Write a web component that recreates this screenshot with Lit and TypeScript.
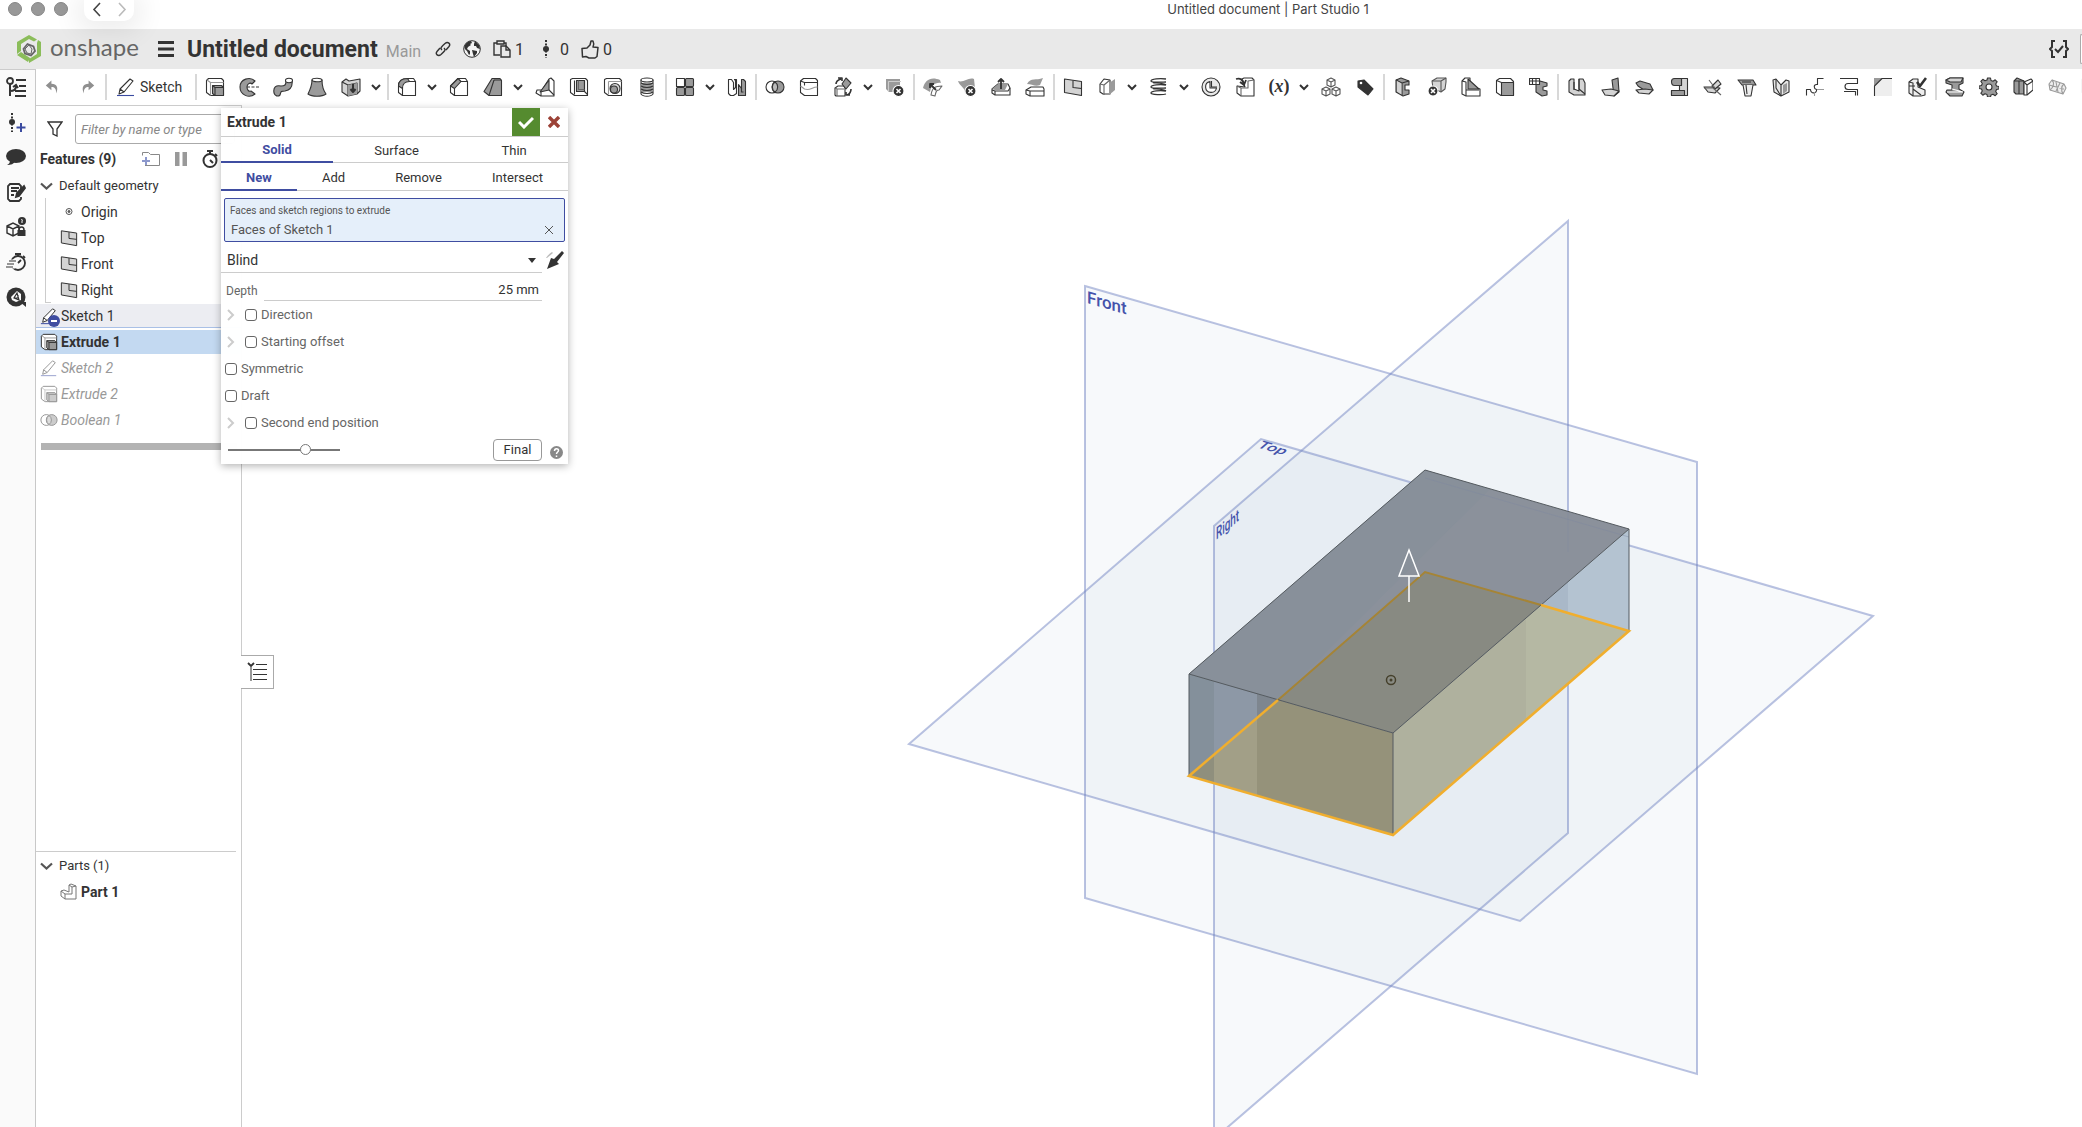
import { LitElement, html, svg, css, nothing } from "lit";
import { customElement, property, state } from "lit/decorators.js";
import { classMap } from "lit/directives/class-map.js";

/* Line icons on a 20 x 20 grid. Groups share the stroke and fill set on the svg. */
const D = "#333";
const G = "#9a9a9a";
const L = "#d4d4d4";
const W = "#fff";

const glyphs: Record<string, unknown> = {
  undo: svg`<path d="M8 2L1 8l7 6v-4c4 0 6 2 6 8 3-7 1-12-6-12z" fill="#8f8f8f" stroke="none"/>`,
  redo: svg`<path d="M12 2l7 6-7 6v-4c-4 0-6 2-6 8-3-7-1-12 6-12z" fill="#8f8f8f" stroke="none"/>`,
  pencil: svg`<path d="M4 12L14 2l3 2-9 11-5 2zM4 12l4 3" fill="#fff"/><path d="M1 18.5h17" stroke="#3b4ba0"/>`,
  extrude: svg`<path d="M1.5 3.5l2-2h13l2 2v15H5.500l-4-3z" fill="${W}"/><path d="M5.500 5.500h13M5.500 5.500v13M2 3l3.500 2.500" stroke="${G}"/><path d="M7.500 8.500h9l2 2v8h-8.500l-2.500-2z" fill="${G}"/><path d="M7.500 8.500l2.500 2v8M10 10.500h8.500"/>`,
  revolve: svg`<path d="M16 4C11-1 1 2 1 10s9 12 15 7l-4-3c-2 1-4-1-4-4s3-5 5-3z" fill="${G}"/><path d="M8 10h12" stroke-dasharray="3 1.500"/>`,
  sweep: svg`<path d="M1 16c-1-6 2-8 7-7 4 0 5-1 5-5l6-1c1 7-2 10-7 11-4 0-4 0-5 4-2 2-5 1-6-2z" fill="${G}"/><ellipse cx="16" cy="3.500" rx="3.500" ry="2.200" fill="${W}"/>`,
  loft: svg`<path d="M5 3c0 6-2 10-4 14 4 3 14 3 18 0-3-4-4-8-4-14z" fill="${G}"/><ellipse cx="10" cy="3" rx="5" ry="1.800" fill="${W}"/>`,
  thicken: svg`<path d="M1 5l4-3 3 2 11-2v12l-3 3-9 2-6-4z" fill="${L}"/><path d="M7 8v11M1 5l6 3 9-2v11" fill="none"/><path d="M7 8l9-2v11l-9 2z" fill="${G}" stroke="none"/><path d="M12 7v8M9.500 12l2.500 3 2.500-3" stroke-width="2"/>`,
  fillet: svg`<path d="M1.500 9c0-5 3-7.500 9-7.500h6l2 3v14H5.500l-4-3z" fill="${W}"/><path d="M1.500 9c0-5 3-7.500 9-7.500l2 3c-5 0-7 2-7 7z" fill="${G}"/><path d="M5.500 11v7.500M12 4.500h6.500"/>`,
  chamfer: svg`<path d="M1.500 9L9 1.500h7.500l2 3v14H5.500l-4-3z" fill="${W}"/><path d="M1.500 9L9 1.500l3 3-6.500 7z" fill="${G}"/><path d="M5.500 11v7.500M12 4.500h6.500"/>`,
  draft: svg`<path d="M9 1.500h8l1.500 2v15H6l-5-4z" fill="${G}"/><path d="M11 3h7.500M11 3L6 18.500"/>`,
  rib: svg`<path d="M14 2l2-1 3 3v15H6l-5-3 1-3h5z" fill="${W}"/><path d="M14 3v10L5 15z" fill="${G}"/><path d="M14 13l5 5M6 19v-4"/>`,
  shell: svg`<path d="M1.500 2.500l2-1h13l2 2v15H5.500l-4-3z" fill="${W}"/><path d="M7.500 3.500h8v11h-8z" fill="${G}"/><path d="M5.500 3.500v14M15.500 3.500v11M7.500 14.500h8l3 3"/><path d="M9.500 3.500v9h6" stroke="#666"/>`,
  hole: svg`<path d="M1.500 2.500l2-1h13l2 2v15H5.500l-4-3z" fill="${W}"/><path d="M5.500 4.500h13M5.500 4.500v13" stroke="${G}"/><circle cx="12" cy="11.500" r="5" fill="${L}"/><circle cx="11" cy="12.500" r="3.500" fill="${G}"/>`,
  thread: svg`<path d="M4 3v14c2 3 10 3 12 0V3z" fill="${W}"/><ellipse cx="10" cy="3" rx="6" ry="2" fill="${W}"/><path d="M4 6h12v9H4z" fill="${G}" stroke="none"/><path d="M4 6c3 2 9 2 12 0M4 9c3 2 9 2 12 0M4 12c3 2 9 2 12 0M4 15c3 2 9 2 12 0"/>`,
  pattern: svg`<rect x="1.500" y="1.500" width="8" height="8" fill="${W}"/><rect x="10.500" y="1.500" width="8" height="8" rx="1" fill="${G}"/><rect x="1.500" y="10.500" width="8" height="8" rx="1" fill="${G}"/><rect x="10.500" y="10.500" width="8" height="8" rx="1" fill="${G}"/>`,
  mirror: svg`<path d="M1.500 2.500h3l2 3v7l2-2v-7l-1-1h2v14l-3 2h-3l-2-2z" fill="${W}"/><path d="M11.500 18.500v-11l3 4v-9h2l2 2v14z" fill="${G}"/><path d="M14.500 11v4h2"/>`,
  boolean: svg`<circle cx="7" cy="10" r="6" fill="${W}"/><circle cx="13" cy="10" r="6" fill="${G}"/><path d="M10 5a6 6 0 0 1 0 10 6 6 0 0 1 0-10z" fill="#bbb"/>`,
  split: svg`<path d="M1.500 4l3-2.500h12l2 2v15H5.500l-4-3z" fill="${W}"/><path d="M1.500 4l4 1.500h13M5.500 5.500v3"/><path d="M1.500 9l4 3c6 2 7-2 13-2" stroke="${G}"/>`,
  transform: svg`<path d="M2 11l3-2h6l1 2v8H3l-1-1z" fill="${W}"/><path d="M2 11l2 1h7M4 12v7" stroke="#666"/><path d="M13 1l5 5-5 6-4-5z" fill="${G}"/><path d="M3 7c0-3 2-4 5-5M5 1h4v3M18 12c0 3-1 5-4 6M13 15v3h4" stroke-width="1.600"/>`,
  delpart: svg`<path d="M1 2h14v13H4l-3-3z" fill="${G}" stroke="none"/><path d="M3.500 15V4.500H16" stroke="#ccc"/><circle cx="13.500" cy="14" r="5.500" fill="${D}" stroke="${W}"/><path d="M11.500 12l4 4m0-4l-4 4" stroke="${W}" stroke-width="1.600"/>`,
  modfillet: svg`<path d="M0 11C2 3 8-1 17 3l1 3c-6-1-10 3-11 9z" fill="${G}" stroke="none"/><path d="M8 18c1-7 4-9 11-9l-3 4c-3 0-3 2-4 6z" fill="${W}" stroke="#666"/><path d="M13 13L7 7M7 11V7h4" stroke-width="1.800"/>`,
  delface: svg`<path d="M1 4c6 2 10-4 16-2l1 9-7 6-3-1c0-6-5-6-7-12z" fill="${G}" stroke="none"/><circle cx="13.500" cy="14" r="5.500" fill="${D}" stroke="${W}"/><path d="M11.500 12l4 4m0-4l-4 4" stroke="${W}" stroke-width="1.600"/>`,
  moveface: svg`<path d="M1 12l6-5h10l2 4v7H4l-3-2z" fill="${W}"/><path d="M1 12l6-5h10l-3 6H4z" fill="${G}" stroke="none"/><path d="M1 13l3 1h13l2-3M4 14v4"/><path d="M10 12V3M7 5l3-3 3 3" stroke-width="1.800"/>`,
  replace: svg`<path d="M1 13l5-3h12l1 2v7H5l-4-2z" fill="${W}"/><path d="M1 13l4 1h14M5 14v5"/><path d="M2 7c4-7 9-3 16-6l-3 7c-5 2-8-1-13-1z" fill="${G}" stroke="none"/>`,
  plane: svg`<path d="M1.500 2L18.500 4.500v14L1.500 15.500z" fill="${L}"/><path d="M10 3.500v7l8.500 1" fill="none"/>`,
  section: svg`<path d="M3 7l4-5 6 1v14H6l-3-2z" fill="${W}"/><path d="M3 7l4 1v10M7 8l6-5" stroke="#666"/><path d="M12 6l6-4v11l-6 5z" fill="${G}" stroke="none"/>`,
  helix: svg`<path d="M17 2C11 1 2 2 2 4s12 1 15 1M17 8c-6-1-15 0-15 2s12 1 15 1M17 14c-6-1-15 0-15 2s12 2 15 1M4 5.500C8 6 15 6 17 8M4 11.500c4 .5 11 .5 13 2.500" stroke-width="1.300" fill="none"/>`,
  pie: svg`<circle cx="10" cy="10" r="9" fill="#e9e9e9"/><path d="M9 4.500a5.500 5.500 0 1 0 6.500 6.500H9z" fill="${W}"/><path d="M10.500 4v6H16" fill="none"/>`,
  derive: svg`<path d="M7 2l2-1h8l2 2v16H6l-4-3V9l8 1z" fill="${W}"/><path d="M2 9l4 2h7V4l6-1M6 11v8" stroke="#666"/><path d="M1 2c4-1 7 0 8 6M5 5l4 3 2-5" stroke-width="1.800" fill="none"/>`,
  variable: svg`<text x="10" y="15" text-anchor="middle" font-family="Liberation Serif, serif" font-weight="700" font-size="18" fill="${D}" stroke="none">(<tspan font-style="italic">x</tspan>)</text>`,
  cubes: svg`<g fill="${W}" stroke="#555"><path d="M6 3l4-2 4 2v5l-4 2-4-2zM6 3l4 2 4-2M10 5v5"/><path d="M1 12l4-2 4 2v5l-4 2-4-2zM1 12l4 2 4-2M5 14v5"/><path d="M11 12l4-2 4 2v5l-4 2-4-2zM11 12l4 2 4-2M15 14v5"/></g>`,
  tag: svg`<path d="M3 4l6-1 9 9-5 6-10-8z" fill="${D}"/><circle cx="6" cy="6" r="1.300" fill="${W}" stroke="none"/>`,
  frame: svg`<path d="M3 3l5-2 8 3v4h-4v5h4v4l-6 2-7-4z" fill="${G}"/><path d="M3 3l6 3 7-2M9 6v12" fill="none"/><path d="M4 4l4.500 2.500v11L4 14.500z" fill="${L}" stroke="none"/>`,
  delframe: svg`<path d="M5 4l5-3h9v4l-1 7-4 3-8-4z" fill="${L}" stroke="#555"/><path d="M5 4h9v10M14 4l5-3" stroke="#555"/><circle cx="6" cy="14" r="5" fill="${D}" stroke="${W}"/><path d="M4 12l4 4m0-4l-4 4" stroke="${W}" stroke-width="1.600"/>`,
  gusset: svg`<path d="M1 4l3-3h5v8l10 3v7H5l-4-2z" fill="${W}"/><path d="M7 2l11 10H7z" fill="${G}"/><path d="M1 4l4 1v14M5 13h13"/>`,
  cube: svg`<path d="M1.500 3.500l3-2h11l3 3v14H6l-4.500-3z" fill="${W}"/><path d="M6.500 5.500h12v13h-12z" fill="${G}"/><path d="M1.500 3.500l5 2"/>`,
  cutlist: svg`<path d="M7 7l4-3 7 2v3l-4 1v3l4 1v4l-5 1-6-4z" fill="${G}"/><path d="M.5 1.500h10v6H.5zM.5 4h10M3.500 1.500v6M7 1.500v6" fill="${W}"/>`,
  sheet: svg`<path d="M2 4l2-2h3v10l5 2V2h4l2 4v12H7l-5-3z" fill="${L}"/><path d="M7 5v8M12 2v10l6 5"/>`,
  flange: svg`<path d="M11 3l6-2 1 14-5 4z" fill="${G}"/><path d="M1 13l9-1 8 2-5 5-9-1z" fill="${L}"/>`,
  hem: svg`<path d="M1 6l4-2 10 3 3 6-6 2-9-6z" fill="${G}"/><path d="M1 13l9-1 8 1-4 4-10-1z" fill="${L}"/>`,
  jog: svg`<path d="M12.500 1.500h6v17h-16v-5h8v-5h2z" fill="${L}"/><path d="M2.500 4.500c0-2 1-3 3-3h7v7h-7c-2 0-3-2-3-4zM2.500 13.500h13v5h-13z" fill="${G}"/>`,
  bend: svg`<path d="M1 10h7l9 1-5 5-7-1z" fill="${L}"/><path d="M9 9l6-6 3 4-6 5z" fill="${L}"/><path d="M1 11h9l8 7M6 3l6 8" stroke="#666"/>`,
  form: svg`<path d="M1 3h15l3 5H5z" fill="${G}"/><path d="M6 8l2 11h6l2-11" fill="#eee"/><path d="M5 5h9M9 8l1 9"/>`,
  corner: svg`<path d="M2 3l3-1 5 6v11l-7-4zM10 8l5-5 3 1v11l-8 4z" fill="#e8e8e8"/><path d="M12 8v9l4-3V6z" fill="${G}" stroke="none"/><path d="M5 2v9l5 8"/>`,
  tab: svg`<path d="M1.500 18.500v-6h4c0 5 7 4 6 0-3-1-3-5 0-5h1v-6h6" fill="none"/><path d="M12 12.500h7M9.500 15v4" stroke="${G}"/>`,
  relief: svg`<path d="M1 1.500h17.500v5H9c-4 0-4 6 0 6h9.500v6" fill="none"/><path d="M5 14.500h11.500v4" fill="none"/>`,
  cornerbreak: svg`<path d="M9 1h10v18H1V9z" fill="#eee" stroke="none"/><path d="M1 1h8L1 9z" fill="${G}" stroke="none"/><path d="M19 1.500H9L1.500 9v10"/>`,
  finish: svg`<path d="M2 5l4-3h5v8l7 3v5l-4 1H6l-4-3z" fill="#eee"/><path d="M2 5l4 1v13M6 12l8 6M2 9h6"/><path d="M10 5l3 4 6-8" stroke-width="2.600" fill="none"/>`,
  beam: svg`<path d="M1 3l4-2h13v5l-4 2v4l5 3-2 4H5l-4-4 1-2h5V8L1 6z" fill="${G}"/><path d="M7 12l11 3M2 15h15" stroke="${W}"/><path d="M1 3l4-2h13l-2 4H5z" fill="${L}"/>`,
  gear: svg`<path d="M8.500 1h3l.5 2.500 2 .8 2.200-1.500 2 2L16.700 7l.8 2 2.500.5v2.500l-2.500.5-.8 2 1.500 2.200-2 2-2.200-1.500-2 .8-.5 2h-3L8 17.500l-2-.8-2.200 1.500-2-2L3.300 14l-.8-2L0 11.500V9l2.500-.5.8-2-1.500-2.200 2-2L6 3.800l2-.8z" fill="${G}"/><circle cx="10" cy="10" r="3" fill="${W}"/>`,
  bookcube: svg`<path d="M1 4l3-3 7 3v13H3l-2-2z" fill="${G}"/><path d="M11 5l7-3 2 2v9l-6 5h-3z" fill="${W}"/><path d="M1 4h10M11 5l3 3v10M14 8l6-4M6 4v13"/>`,
  mesh: svg`<path d="M2 7l3-4 12 4 2 4-3 6-13-4z" fill="#eee" stroke="${G}"/><path d="M5 3c3 3 1 8-2 10M9 5l2 10M2 8l15 4M13 6l-4 8M17 7c-3 2-3 7-1 10" stroke="${G}" fill="none"/>`,
};

const icon = (name: string, size = 20) =>
  svg`<svg class="ic" width="${size}" height="${size}" viewBox="0 0 20 20" fill="none" stroke="#333" stroke-width="1.100" stroke-linejoin="round" aria-hidden="true">${glyphs[name]}</svg>`;

/* "|" is a divider, "v" the drop-down arrow of the tool before it. */
const TOOLS =
  "extrude revolve sweep loft thicken v | fillet v chamfer draft v rib shell hole thread | pattern v mirror | boolean split transform v delpart | modfillet delface moveface replace | plane section v helix v pie derive variable v cubes tag | frame delframe gusset cube cutlist | sheet flange hem jog bend form corner tab relief cornerbreak finish | beam gear bookcube mesh plane".split(" ");

const base = css`
  * { box-sizing: border-box; }
  button { font: inherit; color: inherit; background: none; border: 0; padding: 0; margin: 0; cursor: pointer; }
  svg { display: block; flex: none; }
`;

@customElement("top-bar")
export class TopBar extends LitElement {
  static styles = [base, css`
    :host { display: block; }
    .window { height: 29px; display: grid; grid-template-columns: 1fr auto 1fr; align-items: start; background: #fff; }
    .left { display: flex; align-items: flex-start; padding-left: 8px; }
    .dots { display: flex; gap: 9px; padding-top: 2px; }
    .dot { width: 14px; height: 14px; border-radius: 50%; background: #989898; border: 1px solid #868686; }
    .nav { display: flex; height: 21px; margin-left: 16px; border-radius: 0 0 10px 10px; background: #fff; box-shadow: 0 4px 26px 8px #00000012; position: relative; }
    .nav button { width: 25px; height: 18px; display: grid; place-items: center; }
    .caption { font: 400 13px/18px Inter, sans-serif; color: #444; padding: 0 0 0 454px; }
    .doc { height: 40px; background: #e9e9e9; display: flex; align-items: center; padding-left: 16px; color: #333; }
    .brand { display: flex; align-items: center; gap: 8px; width: 142px; color: #666; text-decoration: none; font: 400 24px/30px Lato, sans-serif; }
    .brand span { padding-bottom: 4px; }
    h1 { margin: 0 0 0 13px; padding-top: 2px; font: 700 23px/30px Roboto, sans-serif; }
    .branch { color: #999; font-size: 16px; line-height: 20px; margin: 6px 14px 0 8px; }
    .meta { display: flex; align-items: center; gap: 4px; font-size: 16px; margin-right: 12px; }
    .menu { display: grid; }
    .right { margin-left: auto; display: flex; align-items: center; gap: 11px; }
    .edge { width: 2px; height: 30px; border: 1px solid #aaa; border-right: 0; border-radius: 4px 0 0 4px; background: #fff; }
  `];
  render() {
    return html`
      <div class="window">
        <div class="left">
          <div class="dots"><i class="dot"></i><i class="dot"></i><i class="dot"></i></div>
          <div class="nav">
            <button aria-label="Back"><svg width="10" height="16" viewBox="0 0 10 16" fill="none" stroke="#444" stroke-width="1.600"><path d="M8 2L2 8.500 8 15"/></svg></button>
            <button aria-label="Forward"><svg width="10" height="16" viewBox="0 0 10 16" fill="none" stroke="#bbb" stroke-width="1.600"><path d="M2 2l6 6.500L2 15"/></svg></button>
          </div>
        </div>
        <div class="caption">Untitled document | Part Studio 1</div>
        <div></div>
      </div>
      <div class="doc">
        <a class="brand" href="#">
          <svg width="26" height="28" viewBox="0 0 26 28"><path d="M13 0l8 4.500-3 2L13 4 5 9v7l-4 3V7zM22 5l3 2v14l-12 7v-4l8-5V8zM1 20l4-3 9 6-2 4z" fill="#8bbd5a"/><path d="M11.500 9l6 2.500L19 16l-4 4.500-6-2L7.500 14z" fill="none" stroke="#666" stroke-width="1.800"/><path d="M13 10l3 4-1 5-4-1-2-4z" fill="none" stroke="#666"/></svg>
          <span>onshape</span></a>
        <button class="menu" aria-label="Document menu"><svg width="16" height="16" viewBox="0 0 16 16" stroke="#333" stroke-width="3"><path d="M0 1.500h16M0 8h16M0 14.500h16"/></svg></button>
        <h1>Untitled document</h1>
        <span class="branch">Main</span>
        <button class="meta" aria-label="Copy link"><svg width="16" height="16" viewBox="0 0 16 16" fill="none" stroke="#333" stroke-width="1.400"><path d="M7 9C5 7 6 6 10 2.500c3-2.500 6 .5 4 3L11 9M9 7c2 2 1 3-3 6.500-3 2.500-6-.5-4-3L5 7"/></svg></button>
        <button class="meta" aria-label="Public document"><svg width="18" height="18" viewBox="0 0 18 18"><circle cx="9" cy="9" r="8.300" fill="#f4f4f4" stroke="#333"/><path d="M2 5c2-3 4-4 6-4l1 2-2 1 1 1-3 2-1 2 3 2 0 3-1 1-2-4C1 9 1 7 2 5zM12 1l4 4 1 4-3-1-1-2-2 0 0-2zM9 10l5 1 0 2-3 4-1-3z" fill="#333"/></svg></button>
        <button class="meta" aria-label="Copies"><svg width="18" height="18" viewBox="0 0 18 18" fill="none" stroke="#333" stroke-width="1.400"><path d="M7 15H1V3h3M11 3h2v3M4 1h7v3H4z"/><path d="M8 6h5l4 4v7H8z"/><path d="M13 6v4h4"/></svg>1</button>
        <button class="meta" aria-label="Versions"><svg width="20" height="18" viewBox="0 0 20 18" stroke="#333" stroke-width="2"><path d="M10 0v18" stroke-dasharray="2 1.500"/><circle cx="10" cy="9" r="3" fill="#333" stroke="none"/></svg>0</button>
        <button class="meta" aria-label="Likes"><svg width="18" height="19" viewBox="0 0 18 19" fill="none" stroke="#333" stroke-width="1.500" stroke-linejoin="round"><path d="M1 8.500l5-.5 3-3 1-4h2c1 2 1 4 0 6l5 .5-1 9-2 1.500H8l-3-1.500-3.500.5z"/></svg>0</button>
        <div class="right">
          <button aria-label="Feature script"><svg width="20" height="18" viewBox="0 0 20 18" fill="none" stroke="#333" stroke-width="2"><path d="M6 1H3v6L1 9l2 2v6h3M14 1h3v6l2 2-2 2v6h-3M6 9l3 3 5-6"/></svg></button>
          <i class="edge"></i>
        </div>
      </div>`;
  }
}

@customElement("tool-bar")
export class ToolBar extends LitElement {
  static styles = [base, css`
    :host { display: flex; height: 36px; align-items: center; background: #fff; overflow: hidden; font-size: 14px; color: #333; }
    .tool { flex: none; width: 34px; height: 34px; display: grid; place-items: center; }
    .arrow { flex: none; width: 18px; height: 34px; display: grid; align-items: center; padding-left: 3px; }
    .sep { flex: none; width: 2px; height: 26px; margin: 0 1px; background: #d8d8d8; }
    .sketch { flex: none; display: flex; align-items: center; gap: 4px; padding: 0 12px 0 8px; height: 34px; }
  `];
  render() {
    return html`
      <button class="tool" aria-label="undo">${icon("undo", 16)}</button>
      <button class="tool" aria-label="redo">${icon("redo", 16)}</button>
      <i class="sep"></i>
      <button class="sketch">${icon("pencil")}<span>Sketch</span></button>
      <i class="sep"></i>
      ${TOOLS.map((t) =>
        t === "|" ? html`<i class="sep"></i>`
        : t === "v" ? html`<button class="arrow" aria-label="More tools"><svg width="10" height="7" viewBox="0 0 10 7" fill="none" stroke="#333" stroke-width="2"><path d="M1 1l4 4 4-4"/></svg></button>`
        : html`<button class="tool" aria-label=${t}>${icon(t)}</button>`)}`;
  }
}

@customElement("side-rail")
export class SideRail extends LitElement {
  static styles = [base, css`
    :host { display: flex; flex-direction: column; background: #fafafa; border-top: 1px solid #ccc; border-right: 1px solid #c8c8c8; }
    button { height: 35px; display: grid; place-items: center; padding: 0 3px 1px 0; }
  `];
  render() {
    const s = (label: string, body: unknown) =>
      html`<button aria-label=${label}><svg width="20" height="20" viewBox="0 0 20 20" fill="none" stroke="#333" stroke-width="1.800">${body}</svg></button>`;
    return html`
      ${s("Feature list", svg`<circle cx="4" cy="4" r="3"/><path d="M4 7v12M4 14c4 0 6-1 6-5M10 3h10M13 9h7M9 14h11M9 19h11M7 10l3-2 2 3" stroke-width="2"/>`)}
      ${s("Insert version", svg`<path d="M6 1v19" stroke-width="2" stroke-dasharray="2 1.500"/><circle cx="6" cy="10" r="3" fill="#333" stroke="none"/><path d="M15 11v9M10.500 15.500h9" stroke="#3b4ba0" stroke-width="2"/>`)}
      ${s("Comments", svg`<ellipse cx="10" cy="9" rx="10" ry="7" fill="#333" stroke="none"/><path d="M4 13c0 3-1 4-3 5 4 0 7-1 8-4z" fill="#333" stroke="none"/>`)}
      ${s("Notes", svg`<path d="M15 8V4l-2-2H4L2 4v13l2 2h9l2-2v-2M5 6h8M5 9h6M5 13h3"/><path d="M10 15l1-4 7-7 1 2-6 8z" fill="#333"/>`)}
      ${s("Configurations", svg`<g stroke-width="1.400"><path d="M1 9l6-3 6 3v7l-6 3-6-3zM1 9l6 3 6-3M7 12v7"/></g><rect x="11.500" y="13" width="8" height="6" fill="#333" stroke="none"/><path d="M13 13c0-4 5-4 5 0" stroke-width="1.500"/><circle cx="16" cy="4" r="4" fill="#333" stroke="none"/><path d="M15 3c1-1 2 0 1 1v2" stroke="#fff" stroke-width="1"/>`)}
      ${s("Timing", svg`<circle cx="12" cy="11" r="7"/><path d="M9 2h6M12 2v3M12 11l3-3M17 4l2 2"/><path d="M1 9h8M0 12h8M2 15h7" stroke="#fafafa" stroke-width="3"/><path d="M3 9h7M1 12h7M0 15h7" stroke-width="1.200"/>`)}
      ${s("Learning", svg`<circle cx="10" cy="10" r="9.500" fill="#333" stroke="none"/><path d="M14 15h6v5z" fill="#333" stroke="none"/><path d="M11 4l4 3v6l-5 2-4-2-1-3z" fill="#fafafa" stroke="none"/><path d="M11 6l-3 5 5 2zM8 11h4V8" stroke-width="1.200"/>`)}`;
  }
}

interface Row { icon: string; label: string; kind?: string; }

@customElement("feature-panel")
export class FeaturePanel extends LitElement {
  static styles = [base, css`
    :host { display: flex; flex-direction: column; width: 206px; border-top: 1px solid #ccc; border-right: 1px solid #ccc; background: #fff; font-size: 14px; color: #333; }
    .filter { display: flex; align-items: center; gap: 12px; padding: 8px 6px 5px 11px; }
    .filter input { min-width: 0; flex: 1; height: 30px; border: 1px solid #aaa; border-radius: 3px; padding: 0 5px; font: italic 13px Roboto, sans-serif; background: #fff; }
    .filter input::placeholder { color: #888; }
    .heading { display: flex; align-items: center; height: 20px; padding: 0 22px 0 4px; }
    .heading h2 { flex: 1; margin: 0; font-size: 14px; line-height: 20px; }
    .heading div { display: flex; gap: 13px; }
    ul { list-style: none; margin: 0; padding: 0; }
    .root { padding-top: 4px; }
    .group { display: flex; align-items: center; gap: 6px; height: 26px; padding: 0 0 0 4px; width: 100%; font-size: 13px; line-height: 20px; }
    .kids { position: relative; }
    .kids::before { content: ""; position: absolute; left: 9px; top: -1px; bottom: 0; width: 5px; border: solid #ccc; border-width: 0 0 1px 1px; }
    .kids li { padding-left: 24px; }
    li { display: flex; align-items: center; gap: 3px; height: 26px; padding-left: 4px; }
    li .ic { width: 18px; height: 18px; }
    .active { position: relative; background: #ecedf2; height: 24px; margin-top: 1px; border-bottom: 1px solid #a9c0e6; }
    .badge { position: absolute; left: 12px; bottom: 0; }
    .chosen { background: #c3d9f1; font-weight: 700; height: 24px; margin: 2px 0 1px; }
    .off { color: #999; font-style: italic; }
    .off .ic { opacity: .5; }
    .rollback { height: 7px; margin: 10px 4px 0 5px; background: #b3b3b3; }
    .parts { flex: 0 0 27%; margin-top: auto; margin-right: 5px; padding-top: 1px; border-top: 1px solid #ccc; }
    .parts li { padding-left: 24px; font-weight: 700; }
  `];
  private planes: Row[] = [
    { icon: "origin", label: "Origin" },
    { icon: "plane", label: "Top" },
    { icon: "plane", label: "Front" },
    { icon: "plane", label: "Right" },
  ];
  private features: Row[] = [
    { icon: "pencil", label: "Sketch 1", kind: "active" },
    { icon: "extrude", label: "Extrude 1", kind: "chosen" },
    { icon: "pencil", label: "Sketch 2", kind: "off" },
    { icon: "extrude", label: "Extrude 2", kind: "off" },
    { icon: "boolean", label: "Boolean 1", kind: "off" },
  ];
  private chevron = html`<svg width="13" height="9" viewBox="0 0 13 9" fill="none" stroke="#555" stroke-width="2.200"><path d="M1 1.500l5.500 5 5.500-5"/></svg>`;
  render() {
    return html`
      <div class="filter">
        <svg width="16" height="16" viewBox="0 0 16 16" fill="none" stroke="#333" stroke-width="1.300"><path d="M1 1h14L10 8v7l-4-2V8z"/></svg>
        <input type="text" placeholder="Filter by name or type" aria-label="Filter by name or type" />
      </div>
      <div class="heading">
        <h2>Features (9)</h2>
        <div>
          <button aria-label="Add folder"><svg width="20" height="16" viewBox="0 0 20 16" fill="none" stroke="#888"><path d="M4 14.500h14.500v-11h-9l-2-2h-6v3"/><path d="M1 10h8M5 6v8" stroke="#8c98cc" stroke-width="2"/></svg></button>
          <button aria-label="Suspend"><svg width="14" height="16" viewBox="0 0 14 16"><path d="M1 1h4.500v14H1zM8.500 1H13v14H8.500z" fill="#999"/></svg></button>
          <button aria-label="Rebuild times"><svg width="18" height="18" viewBox="0 0 18 18" fill="none" stroke="#333" stroke-width="2"><circle cx="9" cy="10.500" r="6.500"/><path d="M6 1h6M9 1v3M14 4l2 2M9 10l3 3"/></svg></button>
        </div>
      </div>
      <div class="root">
        <button class="group">${this.chevron}<span>Default geometry</span></button>
        <ul class="kids">${this.planes.map((r) => html`<li>${r.icon === "origin"
          ? html`<svg width="18" height="18" viewBox="0 0 18 18" fill="none" stroke="#555"><circle cx="9" cy="8.500" r="3"/><circle cx="9" cy="8.500" r="1" fill="#555"/></svg>`
          : icon(r.icon, 18)}<span>${r.label}</span></li>`)}</ul>
        <ul>${this.features.map((r) => html`<li class=${r.kind ?? nothing}>${icon(r.icon, 18)}${r.kind === "active"
          ? html`<svg class="badge" width="12" height="12" viewBox="0 0 12 12"><circle cx="6" cy="6" r="6" fill="#3f4da1"/><path d="M3 6h6" stroke="#fff" stroke-width="2"/></svg>` : nothing}<span>${r.label}</span></li>`)}</ul>
        <div class="rollback"></div>
      </div>
      <div class="parts">
        <button class="group">${this.chevron}<span>Parts (1)</span></button>
        <ul><li><svg class="ic" width="18" height="18" viewBox="0 0 18 18" fill="#fff" stroke="#777"><path d="M9 2l2-1 5 2v13H5l-4-3V8l3-1 5 2z"/><path d="M9 2l3 2v7H5v5M1 8l4 3M12 4l4-1" fill="none"/></svg><span>Part 1</span></li></ul>
      </div>`;
  }
}

@customElement("extrude-dialog")
export class ExtrudeDialog extends LitElement {
  static styles = [base, css`
    :host { display: block; width: 347px; background: #fffffffa; box-shadow: 0 2px 8px #0000004d; font-size: 13px; color: #333; }
    header { display: flex; height: 29px; border-bottom: 1px solid #ccc; align-items: flex-start; }
    h2 { flex: 1; margin: 0; padding-left: 6px; font-size: 14px; line-height: 29px; }
    .ok { width: 28px; height: 28px; background: #558b2f; display: grid; place-items: center; }
    .no { width: 28px; height: 28px; display: grid; place-items: center; }
    .tabs { display: flex; height: 26px; border-bottom: 1px solid #ccc; }
    .modes { height: 28px; padding-top: 1px; }
    .tabs button { flex: 1 1 auto; line-height: 25px; height: 26px; }
    .modes button { height: 27px; line-height: 27px; }
    .tabs .on { color: #3f4da1; font-weight: 700; border-bottom: 2px solid #3f4da1; }
    .pick { margin: 7px 3px 0; height: 44px; padding: 4px 11px 0 5px; border: 1px solid #3f4da1; border-radius: 2px; background: #e5effa; color: #555; }
    .pick small { display: block; font-size: 10px; line-height: 16px; }
    .pick div { display: flex; justify-content: space-between; align-items: center; line-height: 21px; padding-left: 1px; }
    .blind { display: flex; height: 31px; align-items: stretch; }
    .selectbox { flex: 1; position: relative; border-bottom: 1px solid #ccc; margin-right: 4px; display: flex; }
    select { appearance: none; width: 100%; border: 0; background: none; padding: 6px 6px 0; font: inherit; font-size: 14px; color: inherit; }
    .caret { position: absolute; right: 6px; top: 16px; pointer-events: none; }
    .flip { width: 22px; padding-top: 4px; }
    .depth { display: flex; align-items: flex-end; height: 28px; margin-right: 26px; padding-left: 5px; gap: 6px; }
    .depth label { font-size: 12px; line-height: 20px; color: #666; }
    .depth input { flex: 1; min-width: 0; height: 22px; border: 0; border-bottom: 1px solid #ccc; padding: 0 3px 0; background: none; font: inherit; color: inherit; text-align: right; }
    .opt { display: flex; align-items: center; height: 27px; padding-left: 4px; gap: 4px; color: #666; }
    .opt button { width: 16px; height: 20px; display: grid; align-items: center; padding-left: 2px; }
    .opt label { display: flex; align-items: center; gap: 4px; line-height: 20px; }
    input[type="checkbox"] { appearance: none; width: 12px; height: 12px; margin: 0; border: 1px solid #666; border-radius: 3px; background: #fff; }
    footer { display: flex; align-items: center; height: 28px; padding: 0 4px 1px 7px; }
    input[type="range"] { appearance: none; width: 112px; height: 12px; margin: 0; background: linear-gradient(#777, #777) center / 100% 2px no-repeat; }
    input[type="range"]::-webkit-slider-thumb { appearance: none; width: 11px; height: 11px; border-radius: 50%; background: #fff; border: 1px solid #777; }
    .final { margin-left: auto; width: 49px; height: 22px; border: 1px solid #999; border-radius: 4px; line-height: 20px; }
    .help { margin: 6px 1px 0 8px; }
  `];
  @state() private shape = "Solid";
  @state() private mode = "New";
  private option(label: string, nested: boolean) {
    return html`<div class="opt">
      ${nested ? html`<button aria-label="Expand ${label}"><svg width="8" height="12" viewBox="0 0 8 12" fill="none" stroke="#ccc" stroke-width="2"><path d="M1 1l5 5-5 5"/></svg></button>` : nothing}
      <label><input type="checkbox" />${label}</label>
    </div>`;
  }
  render() {
    return html`
      <header>
        <h2>Extrude 1</h2>
        <button class="ok" aria-label="Accept"><svg width="16" height="13" viewBox="0 0 16 13" fill="none" stroke="#fff" stroke-width="3"><path d="M1 6l5 5 9-9"/></svg></button>
        <button class="no" aria-label="Cancel"><svg width="12" height="12" viewBox="0 0 12 12" stroke="#9c4237" stroke-width="3.400"><path d="M1 1l10 10M11 1L1 11"/></svg></button>
      </header>
      <div class="tabs">${["Solid", "Surface", "Thin"].map((t) => html`<button class=${classMap({ on: t === this.shape })} @click=${() => (this.shape = t)}>${t}</button>`)}</div>
      <div class="tabs modes">${["New", "Add", "Remove", "Intersect"].map((t) => html`<button class=${classMap({ on: t === this.mode })} @click=${() => (this.mode = t)}>${t}</button>`)}</div>
      <div class="pick">
        <small>Faces and sketch regions to extrude</small>
        <div><span>Faces of Sketch 1</span><button aria-label="Clear"><svg width="8" height="8" viewBox="0 0 8 8" stroke="#555"><path d="M0 0l8 8M8 0L0 8"/></svg></button></div>
      </div>
      <div class="blind">
        <div class="selectbox"><select aria-label="End type"><option>Blind</option></select>
          <svg class="caret" width="8" height="5" viewBox="0 0 8 5"><path d="M0 0h8L4 5z" fill="#333"/></svg></div>
        <button class="flip" aria-label="Flip direction"><svg width="20" height="20" viewBox="0 0 20 20"><path d="M1 19L5 8l3 1 8-8 2 2-7 9 2 2z" fill="#333"/><path d="M0 8c2-3 3-4 6-6l1 1-6 5z" fill="#bbb"/></svg></button>
      </div>
      <div class="depth"><label for="depth">Depth</label><input id="depth" value="25 mm" /></div>
      <div class="opts">
        ${this.option("Direction", true)}
        ${this.option("Starting offset", true)}
        ${this.option("Symmetric", false)}
        ${this.option("Draft", false)}
        ${this.option("Second end position", true)}
      </div>
      <footer>
        <input type="range" min="0" max="100" value="71" aria-label="Preview opacity" />
        <button class="final">Final</button>
        <button class="help" aria-label="Help"><svg width="13" height="13" viewBox="0 0 13 13"><circle cx="6.500" cy="6.500" r="6.500" fill="#888"/><path d="M4.500 5c0-3 4-3 4-.5 0 1.500-2 1.500-2 3.500M6.500 9.500v1.500" fill="none" stroke="#fff" stroke-width="1.500"/></svg></button>
      </footer>`;
  }
}

/* Isometric view: three datum planes and the extruded block. */
@customElement("model-view")
export class ModelView extends LitElement {
  static styles = [base, css`
    :host { display: block; overflow: hidden; }
    .scene { width: 100%; }
    .datum { fill: #4f76a0; fill-opacity: .045; stroke: #7486c4; stroke-opacity: .5; stroke-width: 2; }
    .name { font: 500 17px Roboto, sans-serif; fill: #4553ab; }
    .edge { fill: none; stroke: #555b60; stroke-width: 1; }
    .picked { fill: none; stroke: #f0ae2e; stroke-width: 2.500; }
    .hidden { fill: none; stroke: #a58436; stroke-width: 2; }
  `];
  render() {
    return html`<svg class="scene" viewBox="242 105 1840 1022" preserveAspectRatio="xMinYMin meet" role="img" aria-label="Part view">
      <polygon class="datum" points="1085,286 1697,462 1697,1074 1085,898"/>
      <polygon class="datum" points="1214,526 1568,221 1568,833 1214,1139"/>
      <polygon class="datum" points="909,744 1261,439 1873,616 1520,921"/>
      <text class="name" transform="matrix(1 .29 0 1 1087 303)">Front</text>
      <text class="name" transform="matrix(.95 .28 -.6 .52 1256 447)">Top</text>
      <text class="name" transform="matrix(.58 -.5 0 1 1216 540)">Right</text>
      <polygon points="1189,674 1393,733 1393,835 1189,776" fill="#95927a"/>
      <polygon points="1189,776 1257,717 1257,795" fill="#a29f87"/>
      <polygon points="1189,776 1214,754 1214,783" fill="#8f8f7d"/>
      <polygon points="1189,674 1278,700 1189,776" fill="#84909b"/>
      <polygon points="1214,681 1257,694 1257,717 1214,754" fill="#8d98a6"/>
      <polygon points="1257,694 1278,700 1257,717" fill="#7e868f"/>
      <polygon points="1393,733 1629,529 1629,631 1393,835" fill="#afb19e"/>
      <polygon points="1526,618 1541,605 1629,631 1526,720" fill="#b5b8a3"/>
      <polygon points="1541,605 1629,529 1629,631" fill="#b4c3d1"/>
      <polygon points="1541,605 1568,581 1568,613" fill="#a9b8c8"/>
      <polygon points="1189,674 1425,470 1629,529 1393,733" fill="#8b919b"/>
      <polygon points="1278,700 1490,489 1425,470 1189,674" fill="#88909a"/>
      <polygon points="1278,700 1425,572 1541,605 1393,733" fill="#888a82"/>
      <path d="M1425 478l204 59M1568 512v40" stroke="#7c86a0" stroke-opacity=".4" fill="none"/>
      <path class="hidden" d="M1278 700l147-128 116 33"/>
      <path class="edge" d="M1189 674l236-204 204 59-236 204zM1189 674v102M1393 733v102M1629 529v102"/>
      <path class="picked" d="M1278 700l-89 76 204 59 236-204-88-26"/>
      <g fill="none" stroke="#fff" stroke-width="1.500"><path d="M1409 550l10 26h-20zM1409 576v26"/></g>
      <circle cx="1391" cy="680" r="4.500" fill="none" stroke="#45402c" stroke-width="1.500"/><circle cx="1391" cy="680" r="1.500" fill="#45402c"/>
    </svg>`;
  }
}

@customElement("app-root")
export class AppRoot extends LitElement {
  @property({ type: Boolean }) open = true;
  static styles = [base, css`
    :host { display: flex; flex-direction: column; height: 100vh; overflow: hidden; background: #fff; font-family: Roboto, "Liberation Sans", sans-serif; }
    .work { flex: 1; min-height: 0; display: grid; grid-template-columns: 36px 1fr; grid-template-rows: auto 1fr; }
    side-rail { grid-row: 1 / 3; }
    tool-bar { min-width: 0; }
    .body { position: relative; min-height: 0; display: flex; }
    .canvas { position: relative; flex: 1; min-width: 0; }
    .dialog { position: absolute; left: 185px; top: 3px; }
    .list { position: absolute; left: -1px; top: 550px; width: 33px; height: 34px; border: 1px solid #aaa; border-left: 0; background: #fff; display: grid; place-items: center; }
  `];
  render() {
    return html`
      <top-bar></top-bar>
      <div class="work">
        <side-rail></side-rail>
        <tool-bar></tool-bar>
        <div class="body">
          <feature-panel></feature-panel>
          <div class="canvas">
            <model-view></model-view>
            <button class="list" aria-label="Toggle feature list"><svg width="20" height="20" viewBox="0 0 20 20" fill="none" stroke="#333"><path d="M1 1l3 3 3-3" stroke-width="1.800"/><path d="M4 5v14" stroke="#999" stroke-width="2"/><path d="M9 2.500h11M6 7.500h14M6 12.500h14M6 17.500h14" stroke-width="1.200"/></svg></button>
          </div>
          ${this.open ? html`<extrude-dialog class="dialog"></extrude-dialog>` : nothing}
        </div>
      </div>`;
  }
}
